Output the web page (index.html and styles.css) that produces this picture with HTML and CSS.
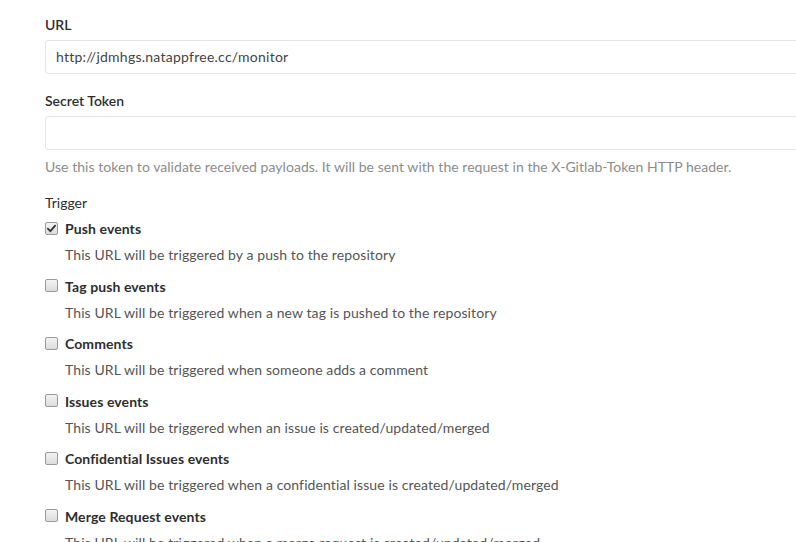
FILE: index.html
```html
<!DOCTYPE html>
<html>
<head>
<meta charset="utf-8">
<link rel="stylesheet" href="styles.css">
</head>
<body>
<div class="form">
  <div class="group">
    <div class="label">URL</div>
    <div class="input">http://jdmhgs.natappfree.cc/monitor</div>
  </div>
  <div class="group">
    <div class="label">Secret Token</div>
    <div class="input"></div>
    <div class="help">Use this token to validate received payloads. It will be sent with the request in the X-Gitlab-Token HTTP header.</div>
  </div>
  <div class="trigger">
    <div class="label plain">Trigger</div>
    <div class="item">
      <div class="row"><span class="cb checked"><svg viewBox="0 0 13 13" width="13" height="13"><path d="M3 6.8 L5.4 9.2 L10 3.8" fill="none" stroke="#333" stroke-width="1.8" stroke-linecap="square"/></svg></span><span class="name">Push events</span></div>
      <div class="desc">This URL will be triggered by a push to the repository</div>
    </div>
    <div class="item">
      <div class="row"><span class="cb"></span><span class="name">Tag push events</span></div>
      <div class="desc">This URL will be triggered when a new tag is pushed to the repository</div>
    </div>
    <div class="item">
      <div class="row"><span class="cb"></span><span class="name">Comments</span></div>
      <div class="desc">This URL will be triggered when someone adds a comment</div>
    </div>
    <div class="item">
      <div class="row"><span class="cb"></span><span class="name">Issues events</span></div>
      <div class="desc">This URL will be triggered when an issue is created/updated/merged</div>
    </div>
    <div class="item">
      <div class="row"><span class="cb"></span><span class="name">Confidential Issues events</span></div>
      <div class="desc">This URL will be triggered when a confidential issue is created/updated/merged</div>
    </div>
    <div class="item">
      <div class="row"><span class="cb"></span><span class="name">Merge Request events</span></div>
      <div class="desc">This URL will be triggered when a merge request is created/updated/merged</div>
    </div>
  </div>
</div>
</body>
</html>
```
FILE: styles.css
```css
html, body {
  margin: 0;
  padding: 0;
  background: #fff;
  overflow: hidden;
}
body {
  font-family: Lato, "Open Sans", sans-serif;
  font-size: 14px;
  line-height: 20px;
  color: #2e2e2e;
}
.form {
  padding: 15px 0 0 45px;
  width: 800px;
}
.group {
  margin-bottom: 17px;
}
.label {
  font-weight: 600;
  color: #2e2e2e;
  margin-bottom: 5px;
}
.label.plain {
  font-weight: 400;
  margin-bottom: 6px;
}
.input {
  box-sizing: border-box;
  height: 34px;
  width: 800px;
  border: 1px solid #e5e5e5;
  border-radius: 3px;
  padding: 6px 10px;
  color: #444;
  letter-spacing: 0.25px;
}
.help {
  margin-top: 7px;
  color: #8c8c8c;
  letter-spacing: 0.04px;
}
.trigger {
  margin-top: -1px;
}
.item {
  margin-bottom: 11.5px;
}
.row {
  display: flex;
  align-items: center;
  height: 20px;
}
.cb {
  box-sizing: border-box;
  width: 13px;
  height: 13px;
  border: 1px solid #9a9a9a;
  border-radius: 2px;
  background: linear-gradient(#f3f3f3, #dcdcdc);
  margin-right: 7px;
  position: relative;
  top: -1px;
  display: flex;
  align-items: center;
  justify-content: center;
}
.cb svg {
  display: block;
  flex: none;
}
.name {
  font-weight: 700;
  color: #2e2e2e;
  letter-spacing: 0.1px;
}
.desc {
  margin-top: 6px;
  padding-left: 20px;
  color: #555;
  letter-spacing: 0.1px;
}
```
